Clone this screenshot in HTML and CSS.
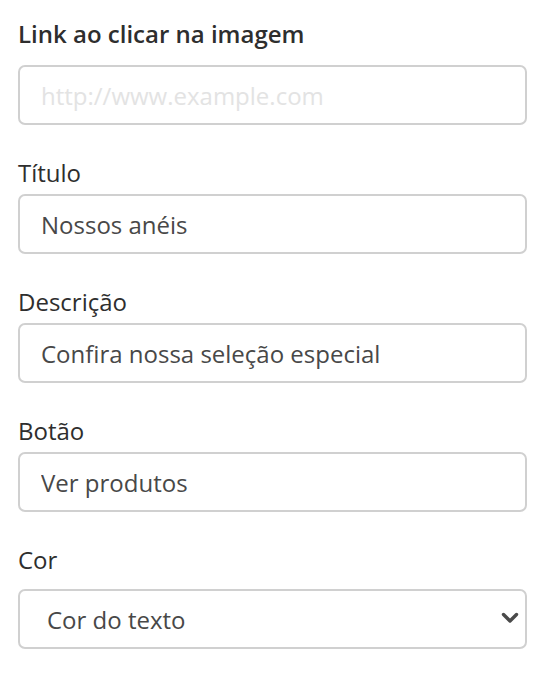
FILE: index.html
```html
<!DOCTYPE html>
<html lang="pt">
<head>
<meta charset="utf-8">
<link rel="stylesheet" href="styles.css">
</head>
<body>
<form class="form">
  <div class="field field-first">
    <label class="label label-strong" for="link">Link ao clicar na imagem</label>
    <input class="input" id="link" type="text" placeholder="http://www.example.com">
  </div>
  <div class="field">
    <label class="label" for="titulo">Título</label>
    <input class="input" id="titulo" type="text" value="Nossos anéis">
  </div>
  <div class="field">
    <label class="label" for="descricao">Descrição</label>
    <input class="input" id="descricao" type="text" value="Confira nossa seleção especial">
  </div>
  <div class="field">
    <label class="label" for="botao">Botão</label>
    <input class="input" id="botao" type="text" value="Ver produtos">
  </div>
  <div class="field field-select">
    <label class="label" for="cor">Cor</label>
    <div class="select-wrap">
      <select class="select" id="cor">
        <option>Cor do texto</option>
      </select>
      <svg class="chevron" width="18" height="12" viewBox="0 0 18 12" aria-hidden="true">
        <path d="M2.5 2.5 L9 9 L15.5 2.5" fill="none" stroke="#4a4a4a" stroke-width="3.4" stroke-linecap="round" stroke-linejoin="round"/>
      </svg>
    </div>
  </div>
</form>
</body>
</html>
```

FILE: styles.css
```css
* { box-sizing: border-box; }
html, body { margin: 0; background: #fff; }
body {
  font-family: "Open Sans", "Noto Sans", "Liberation Sans", sans-serif;
  color: #333;
  padding: 19px 23px 0 18px;
}
.form { display: flex; flex-direction: column; gap: 33px; }
.field { display: flex; flex-direction: column; gap: 6px; }
.field-first { gap: 16px; }
.field-select { gap: 14px; }
.label {
  display: block;
  font-size: 24px;
  line-height: 30px;
  color: #2e2e2e;
}
.label-strong { font-weight: 600; }
.input, .select {
  width: 100%;
  height: 60px;
  border: 2px solid #d0d0d0;
  border-radius: 7px;
  background: #fff;
  font-family: inherit;
  font-size: 24px;
  color: #484848;
  padding: 0 21px;
  outline: none;
}
.input::placeholder { color: #e3e3e3; opacity: 1; }
.select-wrap { position: relative; }
.select {
  -webkit-appearance: none;
  appearance: none;
  padding: 0 27px;
}
.chevron {
  position: absolute;
  right: 8px;
  top: 23px;
  pointer-events: none;
}
```
